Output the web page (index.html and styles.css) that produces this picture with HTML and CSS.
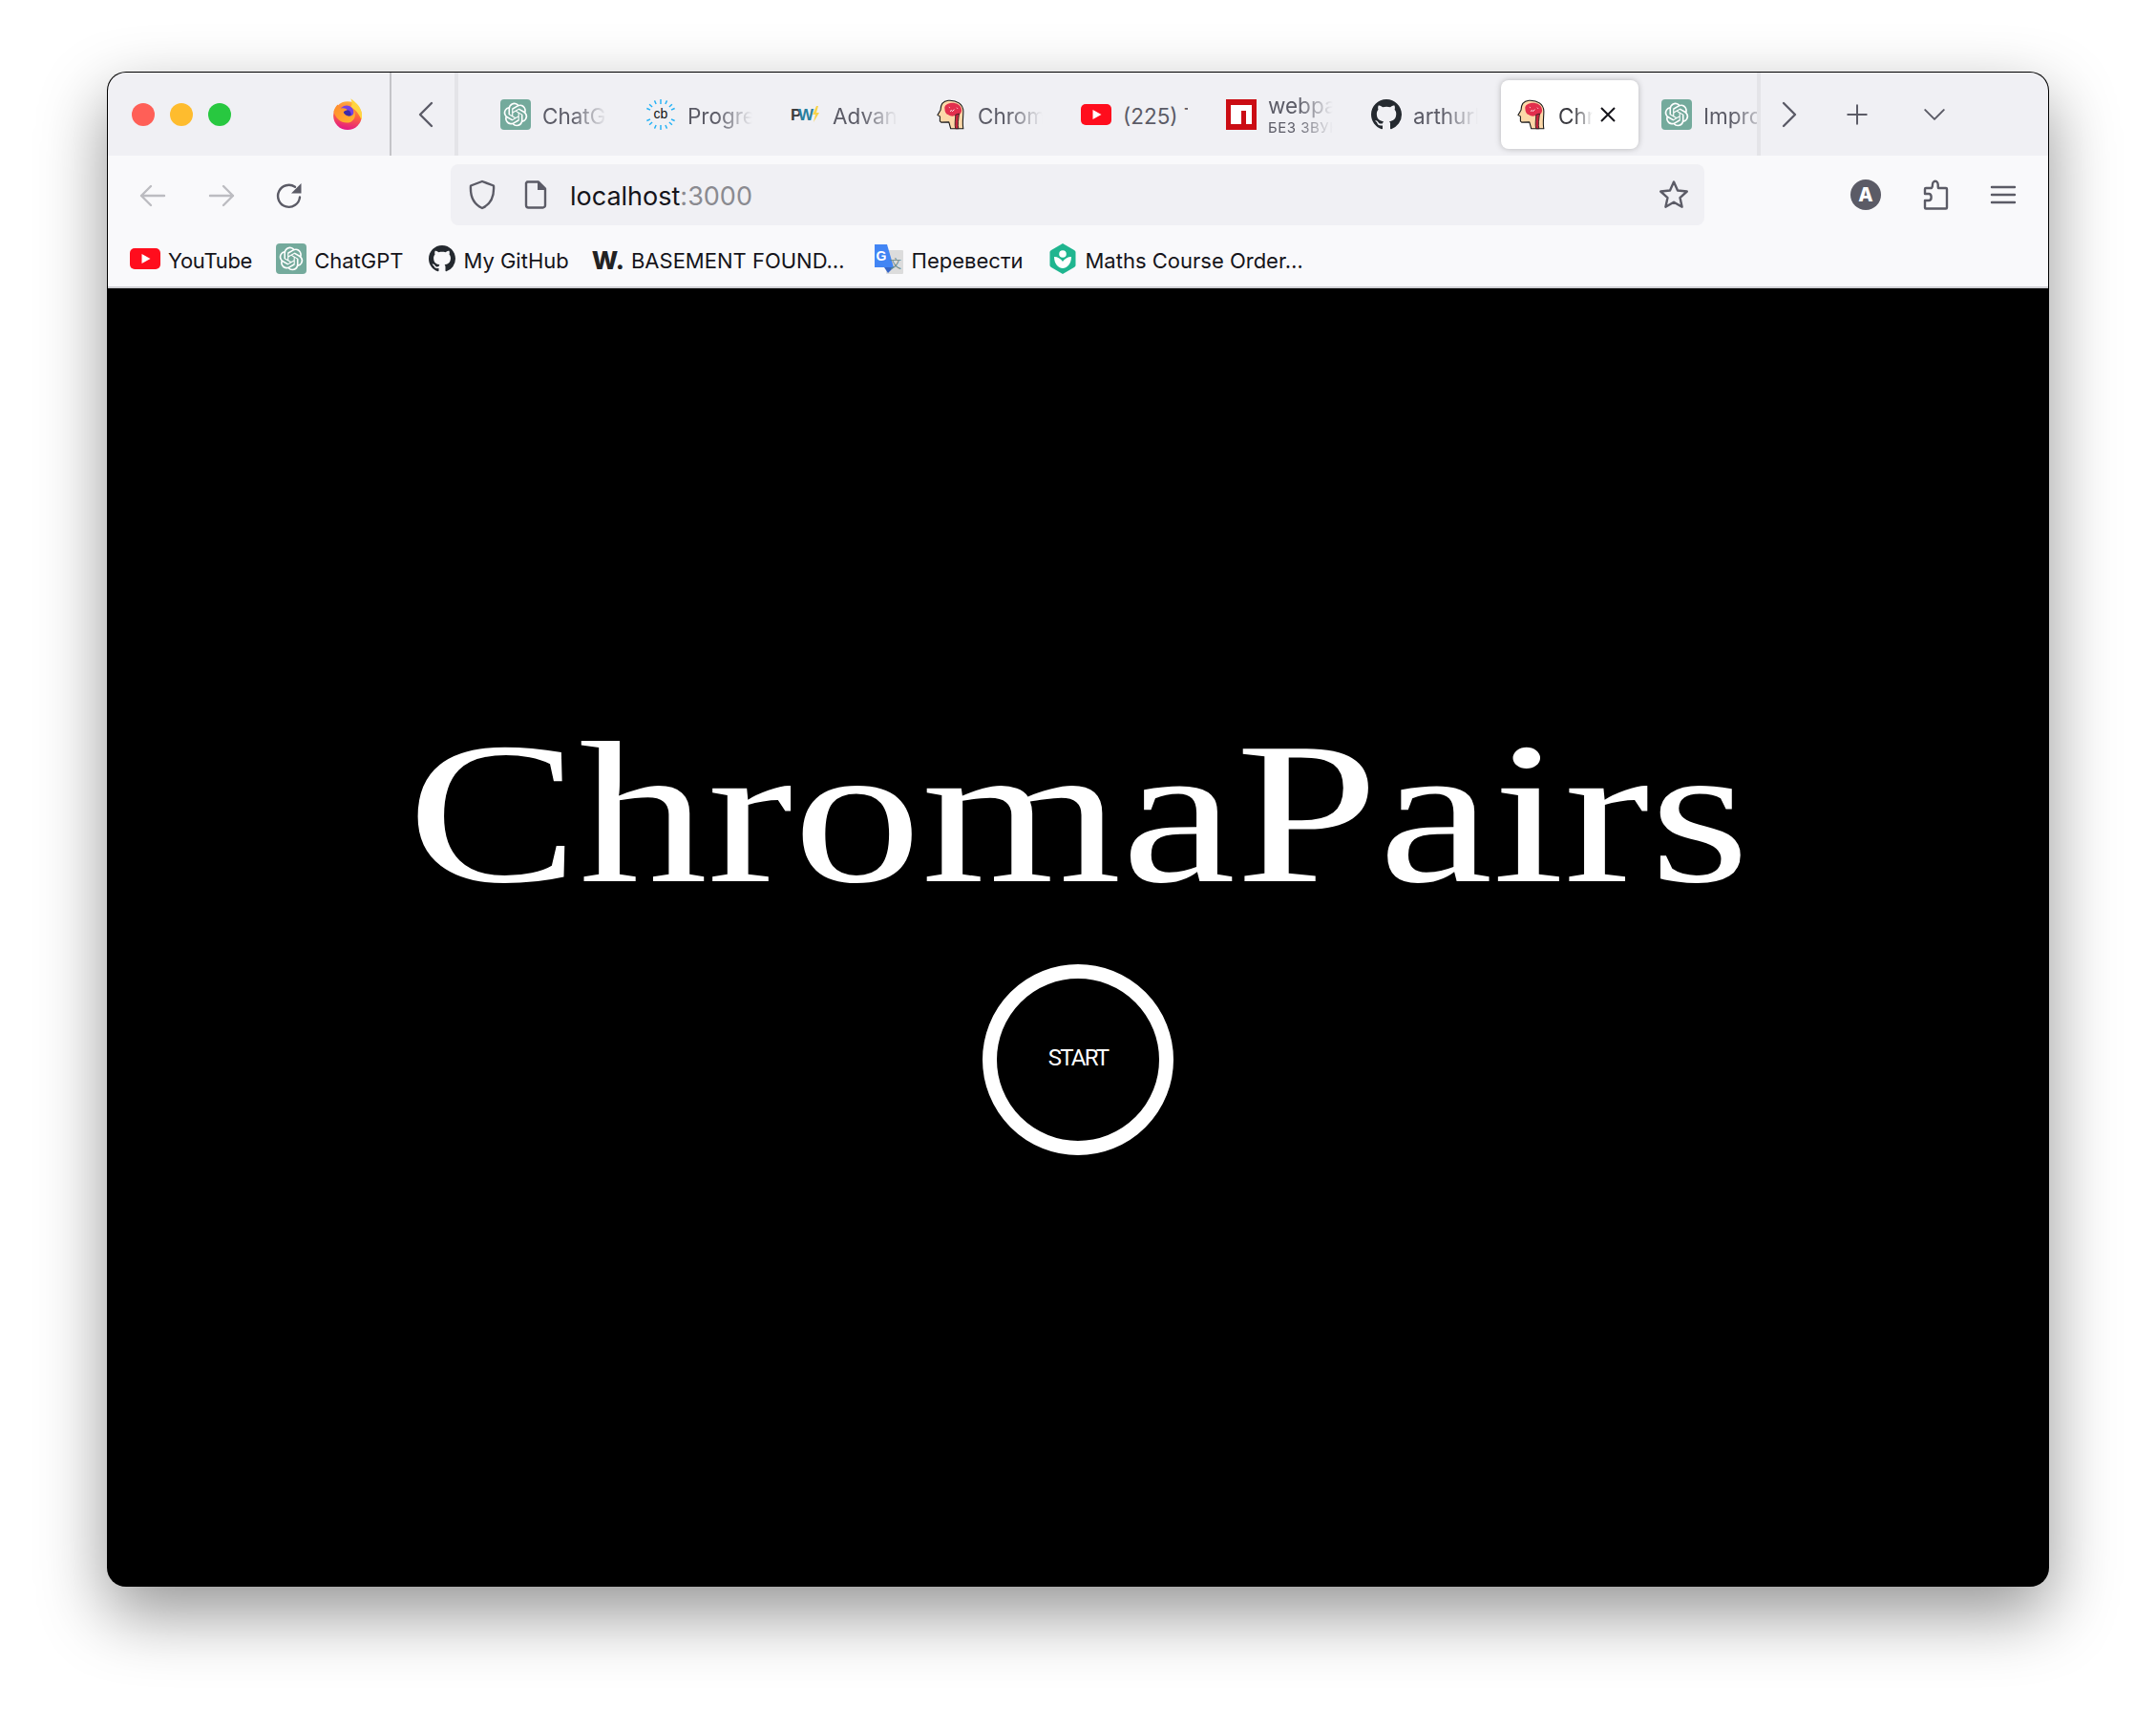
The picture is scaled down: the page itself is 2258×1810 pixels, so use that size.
FILE: index.html
```html
<!DOCTYPE html>
<html lang="en">
<head>
    <meta charset="UTF-8">
    <meta name="viewport" content="width=device-width, initial-scale=1.0">
    <title>ChromaPairs</title>
    <link rel="stylesheet" href="styles.css">
</head>
<body>
    <!-- shared icons -->
    <svg class="icon-defs" xmlns="http://www.w3.org/2000/svg">
        <symbol id="i-gpt" viewBox="0 0 32 32">
            <rect width="32" height="32" rx="4" fill="#74aa9c"/>
            <g transform="translate(3.6 3.6) scale(1.03)">
                <path fill="#fff" d="M22.2819 9.8211a5.9847 5.9847 0 0 0-.5157-4.9108 6.0462 6.0462 0 0 0-6.5098-2.9A6.0651 6.0651 0 0 0 4.9807 4.1818a5.9847 5.9847 0 0 0-3.9977 2.9 6.0462 6.0462 0 0 0 .7427 7.0966 5.98 5.98 0 0 0 .511 4.9107 6.051 6.051 0 0 0 6.5146 2.9001A5.9847 5.9847 0 0 0 13.2599 24a6.0557 6.0557 0 0 0 5.7718-4.2058 5.9894 5.9894 0 0 0 3.9977-2.9001 6.0557 6.0557 0 0 0-.7475-7.0729zm-9.022 12.6081a4.4755 4.4755 0 0 1-2.8764-1.0408l.1419-.0804 4.7783-2.7582a.7948.7948 0 0 0 .3927-.6813v-6.7369l2.02 1.1686a.071.071 0 0 1 .038.052v5.5826a4.504 4.504 0 0 1-4.4945 4.4944zm-9.6607-4.1254a4.4708 4.4708 0 0 1-.5346-3.0137l.142.0852 4.783 2.7582a.7712.7712 0 0 0 .7806 0l5.8428-3.3685v2.3324a.0804.0804 0 0 1-.0332.0615L9.74 19.9502a4.4992 4.4992 0 0 1-6.1408-1.6464zM2.3408 7.8956a4.485 4.485 0 0 1 2.3655-1.9728V11.6a.7664.7664 0 0 0 .3879.6765l5.8144 3.3543-2.0201 1.1685a.0757.0757 0 0 1-.071 0l-4.8303-2.7865A4.504 4.504 0 0 1 2.3408 7.872zm16.5963 3.8558L13.1038 8.364 15.1192 7.2a.0757.0757 0 0 1 .071 0l4.8303 2.7913a4.4944 4.4944 0 0 1-.6765 8.1042v-5.6772a.79.79 0 0 0-.407-.667zm2.0107-3.0231l-.142-.0852-4.7735-2.7818a.7759.7759 0 0 0-.7854 0L9.409 9.2297V6.8974a.0662.0662 0 0 1 .0284-.0615l4.8303-2.7866a4.4992 4.4992 0 0 1 6.6802 4.66zM8.3065 12.863l-2.02-1.1638a.0804.0804 0 0 1-.038-.0567V6.0742a4.4992 4.4992 0 0 1 7.3757-3.4537l-.142.0805L8.704 5.459a.7948.7948 0 0 0-.3927.6813zm1.0976-2.3654l2.602-1.4998 2.6069 1.4998v2.9994l-2.5974 1.4997-2.6067-1.4997Z"/>
            </g>
        </symbol>
        <symbol id="i-github" viewBox="0 0 16 16">
            <path fill="#24292f" d="M8 0C3.58 0 0 3.58 0 8c0 3.54 2.29 6.53 5.47 7.59.4.07.55-.17.55-.38 0-.19-.01-.82-.01-1.49-2.01.37-2.53-.49-2.69-.94-.09-.23-.48-.94-.82-1.13-.28-.15-.68-.52-.01-.53.63-.01 1.08.58 1.23.82.72 1.21 1.87.87 2.33.66.07-.52.28-.87.51-1.07-1.78-.2-3.64-.89-3.64-3.95 0-.87.31-1.59.82-2.15-.08-.2-.36-1.02.08-2.12 0 0 .67-.21 2.2.82.64-.18 1.32-.27 2-.27.68 0 1.36.09 2 .27 1.53-1.04 2.2-.82 2.2-.82.44 1.1.16 1.92.08 2.12.51.56.82 1.27.82 2.15 0 3.07-1.87 3.75-3.65 3.95.29.25.54.73.54 1.48 0 1.07-.01 1.93-.01 2.2 0 .21.15.46.55.38A8.013 8.013 0 0016 8c0-4.42-3.58-8-8-8z"/>
        </symbol>
        <symbol id="i-youtube" viewBox="0 0 32 32">
            <rect y="5" width="32" height="22" rx="5" fill="#ff0d1d"/>
            <path fill="#fff" d="M12.5 11l9 5-9 5z"/>
        </symbol>
        <symbol id="i-brain" viewBox="18 20 90 102">
            <path fill="#fcd8a8" stroke="#1a1a1a" stroke-width="3.5" stroke-linejoin="round" d="M54 24C34 26 28 42 28 56L18 73l8 4v16l4 4 26-1 6 22 42 0C100 100 104 80 104 60 104 36 82 22 54 24Z"/>
            <path fill="#e22f4d" d="M42 52C38 38 58 30 72 32 90 34 100 46 98 60 96 70 88 74 80 72 70 80 60 76 54 72 46 70 42 62 42 52Z"/>
            <path fill="#c9263f" stroke="#1a1a1a" stroke-width="2.5" d="M78 72C78 88 74 104 78 118H88C84 104 88 88 90 68Z"/>
            <path fill="none" stroke="#fff" stroke-width="3" d="M60 60l5-3 3 3 6-6M56 46l3 2M82 48l3 3"/>
        </symbol>
    </svg>

    <div class="browser">
        <header class="titlebar">
            <div class="lights">
                <span class="light light-red"></span>
                <span class="light light-yellow"></span>
                <span class="light light-green"></span>
            </div>
            <svg class="firefox" viewBox="27 20 90 100">
                <defs>
                    <linearGradient id="fx-base" x1="0.6" y1="0" x2="0.4" y2="1">
                        <stop offset="0" stop-color="#ffb13c"/>
                        <stop offset="0.45" stop-color="#ff6a3a"/>
                        <stop offset="1" stop-color="#e31587"/>
                    </linearGradient>
                    <linearGradient id="fx-tail" x1="0" y1="0" x2="1" y2="1">
                        <stop offset="0" stop-color="#ff8a2c"/>
                        <stop offset="1" stop-color="#ffb52e"/>
                    </linearGradient>
                </defs>
                <circle cx="72" cy="75" r="45" fill="url(#fx-base)"/>
                <path fill="#ffd53f" d="M82 21C104 36 124 58 116 88 108 68 96 54 82 48 88 40 86 30 82 21Z"/>
                <circle cx="69" cy="66" r="23" fill="#7542e5"/>
                <circle cx="70" cy="70" r="13" fill="#3b2aa8"/>
                <path fill="url(#fx-tail)" d="M28 62C31 52 34 46 41 40 42 46 46 50 52 52 60 50 67 52 71 57 64 60 60 60 59 65 63 73 71 78 81 76 90 74 94 66 91 56 101 70 96 92 76 97 54 101 34 86 28 62Z"/>
            </svg>
            <span class="bar-divider"></span>
            <button class="strip-btn strip-back">
                <svg viewBox="0 0 32 32"><path d="M21 4L9 16l12 12"/></svg>
            </button>
            <span class="strip-fade"></span>

            <div class="tabs">
                <div class="tab">
                    <svg class="tab-icon"><use href="#i-gpt"/></svg>
                    <span class="tab-label">ChatGPT</span>
                </div>
                <div class="tab">
                    <svg class="tab-icon" viewBox="0 0 32 32">
                        <g class="cb-rays">
                            <path d="M16 0v5"/>
                            <path d="M16 0v4" transform="rotate(24 16 16)"/>
                            <path d="M16 0v4" transform="rotate(48 16 16)"/>
                            <path d="M16 0v4" transform="rotate(66 16 16)"/>
                            <path d="M16 0v4" transform="rotate(114 16 16)"/>
                            <path d="M16 0v4" transform="rotate(132 16 16)"/>
                            <path d="M16 0v4" transform="rotate(156 16 16)"/>
                            <path d="M16 0v5" transform="rotate(180 16 16)"/>
                            <path d="M16 0v4" transform="rotate(204 16 16)"/>
                            <path d="M16 0v4" transform="rotate(228 16 16)"/>
                            <path d="M16 0v4" transform="rotate(246 16 16)"/>
                            <path d="M16 0v4" transform="rotate(294 16 16)"/>
                            <path d="M16 0v4" transform="rotate(312 16 16)"/>
                            <path d="M16 0v4" transform="rotate(336 16 16)"/>
                        </g>
                        <text class="cb-text" x="16" y="20">cb</text>
                    </svg>
                    <span class="tab-label">Progress</span>
                </div>
                <div class="tab">
                    <svg class="tab-icon" viewBox="0 0 32 32">
                        <text class="pw-p" x="0" y="22">P</text>
                        <text class="pw-w" x="8" y="22">W</text>
                        <path fill="#f8d34b" d="M27 7l-4 9h3l-2 8 6-10h-3l2-7z"/>
                    </svg>
                    <span class="tab-label">Advanced</span>
                </div>
                <div class="tab">
                    <svg class="tab-icon"><use href="#i-brain"/></svg>
                    <span class="tab-label">ChromaPairs</span>
                </div>
                <div class="tab">
                    <svg class="tab-icon"><use href="#i-youtube"/></svg>
                    <span class="tab-label tab-label-clip">(225) Trending</span>
                </div>
                <div class="tab">
                    <svg class="tab-icon" viewBox="0 0 32 32">
                        <rect width="32" height="32" fill="#cb0d14"/>
                        <rect x="5" y="6" width="22" height="20" fill="#fff"/>
                        <rect x="16" y="12" width="5" height="14" fill="#cb0d14"/>
                    </svg>
                    <span class="tab-label tab-label-double">
                        <span>webpack</span>
                        <small>БЕЗ ЗВУКА</small>
                    </span>
                </div>
                <div class="tab">
                    <svg class="tab-icon"><use href="#i-github"/></svg>
                    <span class="tab-label">arthurlunkov</span>
                </div>
                <div class="tab tab-active">
                    <svg class="tab-icon"><use href="#i-brain"/></svg>
                    <span class="tab-label">ChromaPairs</span>
                    <svg class="tab-close" viewBox="0 0 16 16"><path d="M1 1l14 14M15 1L1 15"/></svg>
                </div>
                <div class="tab">
                    <svg class="tab-icon"><use href="#i-gpt"/></svg>
                    <span class="tab-label">Improve</span>
                </div>
            </div>

            <span class="strip-fade"></span>
            <button class="strip-btn strip-next">
                <svg viewBox="0 0 32 32"><path d="M11 4l12 12-12 12"/></svg>
            </button>
            <button class="strip-btn strip-new">
                <svg viewBox="0 0 32 32"><path d="M16 4v24M4 16h24"/></svg>
            </button>
            <button class="strip-btn strip-list">
                <svg viewBox="0 0 32 32"><path d="M4 10l12 12 12-12"/></svg>
            </button>
        </header>

        <nav class="toolbar">
            <svg class="tool tool-off tool-back" viewBox="0 0 32 32"><path d="M28 16H4M14 6L4 16l10 10"/></svg>
            <svg class="tool tool-off tool-forward" viewBox="0 0 32 32"><path d="M4 16h24M18 6l10 10-10 10"/></svg>
            <svg class="tool tool-reload" viewBox="0 0 32 32">
                <path d="M26 17.5A11.5 11.5 0 1 1 21 6.8"/>
                <path class="solid" d="M27.5 3v10.5H17z"/>
            </svg>
            <div class="urlbar">
                <svg class="tool" viewBox="0 0 32 32"><path d="M16 2l12 4.500c.6 9-1 18.500-12 23.500C5 25 3.400 15.500 4 6.500z"/></svg>
                <svg class="tool url-page" viewBox="0 0 32 32">
                    <path d="M7 2.500h12l7 7V27a2.500 2.500 0 0 1-2.500 2.500h-15A2.500 2.500 0 0 1 6 27V4z"/>
                    <path class="solid" d="M18 2l9 9h-9z"/>
                </svg>
                <span class="url-text">localhost<span class="url-port">:3000</span></span>
                <svg class="tool url-star" viewBox="0 0 32 32"><path d="M16 2.500l4 9 9.800 1-7.300 6.600 2.100 9.600L16 23.800l-8.600 4.900 2.100-9.600L2.200 12.500l9.800-1z"/></svg>
            </div>
            <svg class="tool tool-account" viewBox="0 0 32 32">
                <circle class="solid" cx="16" cy="16" r="16"/>
                <text class="account-letter" x="16" y="23">A</text>
            </svg>
            <svg class="tool tool-puzzle" viewBox="0 0 32 32"><path d="M5 22v7.500a1 1 0 0 0 1 1h21a1 1 0 0 0 1-1V10a1 1 0 0 0-1-1h-8c-1-3 1-5-2-7-2-1-4 1-4 3 0 2 0 3-1 4H6a1 1 0 0 0-1 1v5h4c3.500 0 3.500 7 0 7z"/></svg>
            <svg class="tool tool-menu" viewBox="0 0 32 32"><path d="M4 8h24M4 16h24M4 24h24"/></svg>
        </nav>

        <div class="bookmarks">
            <a class="bookmark bookmark-first">
                <svg class="bookmark-icon"><use href="#i-youtube"/></svg>
                YouTube
            </a>
            <a class="bookmark">
                <svg class="bookmark-icon"><use href="#i-gpt"/></svg>
                ChatGPT
            </a>
            <a class="bookmark bookmark-hub">
                <svg class="bookmark-icon bookmark-gh"><use href="#i-github"/></svg>
                My GitHub
            </a>
            <a class="bookmark bookmark-basement">
                <span class="bookmark-w">W.</span>
                BASEMENT FOUND…
            </a>
            <a class="bookmark">
                <svg class="bookmark-icon" viewBox="0 0 32 32">
                    <rect x="13" y="7" width="18" height="25" rx="1" fill="#dcdcdc"/>
                    <path fill="#4285f4" d="M1 1h13l7 24H1z"/>
                    <path fill="#3565c8" d="M11 25h10l-6 6z"/>
                    <text class="translate-g" x="8" y="18">G</text>
                    <text class="translate-zh" x="23" y="26">文</text>
                </svg>
                Перевести
            </a>
            <a class="bookmark">
                <svg class="bookmark-icon" viewBox="0 0 32 32">
                    <path fill="#1fb58f" d="M16 0l12 7q1.500 1 1.500 2v14q0 1-1.500 2L16 32 4 25q-1.500-1-1.500-2V9Q2.500 8 4 7z"/>
                    <circle cx="16" cy="11" r="3.800" fill="#fff"/>
                    <path fill="#fff" d="M7 14c0 8 5 12 9 12s9-4 9-12c-4 0-7 2-9 5-2-3-5-5-9-5z"/>
                </svg>
                Maths Course Order…
            </a>
        </div>

        <main class="game">
            <h1 class="game-title">ChromaPairs</h1>
            <button class="start-btn">START</button>
        </main>
    </div>
</body>
</html>
```

FILE: styles.css
```css
* {
    box-sizing: border-box;
}

html, body {
    margin: 0;
    height: 100%;
    overflow: hidden;
}

body {
    background-color: #fff;
    font-family: Inter, "Noto Sans", sans-serif;
    color: #15141a;
    padding: 75px 112px 148px;
}

.icon-defs {
    display: none;
}

svg {
    flex: none;
    display: block;
}

button {
    background: none;
    border: 0;
    padding: 0;
}

/* window */
.browser {
    height: 100%;
    display: flex;
    flex-direction: column;
    border: 1px solid rgba(0, 0, 0, 0.22);
    border-radius: 20px;
    overflow: hidden;
    box-shadow: 0 28px 70px rgba(0, 0, 0, 0.42);
    background-color: #000;
}

/* tab strip */
.titlebar {
    flex: none;
    height: 87px;
    display: flex;
    align-items: center;
    background-color: #f0f0f4;
}

.lights {
    display: flex;
    gap: 16px;
    margin-left: 25px;
}

.light {
    width: 24px;
    height: 24px;
    border-radius: 50%;
}

.light-red { background-color: #ff5f57; }
.light-yellow { background-color: #febc2e; }
.light-green { background-color: #28c840; }

.firefox {
    width: 30px;
    height: 33px;
    margin-left: 107px;
}

.bar-divider {
    width: 2px;
    height: 100%;
    margin-left: 29px;
    background-color: #c4c4c8;
}

.strip-btn {
    display: flex;
    align-items: center;
    justify-content: center;
}

.strip-btn svg {
    width: 32px;
    height: 32px;
    fill: none;
    stroke: #5b5b66;
    stroke-width: 2.4;
    stroke-linecap: round;
    stroke-linejoin: round;
}

.strip-back {
    width: 66px;
    padding-left: 8px;
}

.strip-fade {
    width: 4px;
    height: 100%;
    background-color: #e4e4e8;
}

.tabs {
    flex: none;
    width: 1336px;
    margin-left: 24px;
    height: 100%;
    display: flex;
    align-items: center;
    overflow: hidden;
}

.tab {
    flex: none;
    width: 152px;
    height: 72px;
    padding: 0 20px;
    display: flex;
    align-items: center;
    gap: 12px;
    position: relative;
    margin-top: 1px;
}

.tab-icon {
    width: 32px;
    height: 32px;
}

.tab-label {
    flex: 1;
    min-width: 0;
    padding-top: 3px;
    font-size: 22.5px;
    color: #5b5b66;
    white-space: nowrap;
    overflow: hidden;
    -webkit-mask-image: linear-gradient(to right, #000 45%, transparent 100%);
    mask-image: linear-gradient(to right, #000 45%, transparent 100%);
}

.tab-label-clip {
    -webkit-mask-image: none;
    mask-image: none;
}

.tab-label-double {
    display: flex;
    flex-direction: column;
    padding-top: 2px;
    line-height: 22px;
}

.tab-label-double small {
    margin-top: 4px;
    font-size: 15px;
    line-height: 16px;
    letter-spacing: 0.5px;
}

.tab-active::before {
    content: "";
    position: absolute;
    inset: 0 4px;
    background-color: #fff;
    border-radius: 8px;
    box-shadow: 0 0 6px rgba(0, 0, 0, 0.25);
}

.tab-active .tab-icon,
.tab-active .tab-label {
    position: relative;
}

.tab-active .tab-label {
    color: #3a3a40;
    margin-right: 32px;
}

.tab-close {
    position: absolute;
    left: 108px;
    top: 28px;
    width: 16px;
    height: 16px;
    fill: none;
    stroke: #15141a;
    stroke-width: 2;
}

.strip-next {
    width: 32px;
    margin-left: 13px;
}

.strip-new {
    width: 32px;
    margin-left: 40px;
}

.strip-list {
    width: 32px;
    margin-left: 49px;
}

.strip-new svg {
    width: 26px;
    height: 26px;
}

.strip-list svg {
    width: 26px;
    height: 26px;
}

/* tab icon details */
.cb-rays path {
    fill: none;
    stroke: #1fb0f5;
    stroke-width: 1.4;
}

.cb-text {
    font-family: "Liberation Sans", sans-serif;
    font-size: 14px;
    text-anchor: middle;
    fill: #111;
}

.pw-p,
.pw-w {
    font-family: "Liberation Sans", sans-serif;
    font-size: 17px;
    font-weight: 700;
}

.pw-p { fill: #3d3d3d; }
.pw-w { fill: #2a7f9e; }

/* toolbar */
.toolbar {
    flex: none;
    height: 77px;
    padding: 9px 0 4px 31px;
    display: flex;
    align-items: center;
    background-color: #f9f9fb;
}

.tool {
    width: 32px;
    height: 32px;
    fill: none;
    stroke: #5b5b66;
    stroke-width: 2.4;
    stroke-linecap: round;
    stroke-linejoin: round;
}

.tool .solid {
    fill: #5b5b66;
    stroke: none;
}

.tool-off {
    stroke: #bcbcc1;
}

.tool-back {
    margin-top: 2px;
}

.tool-forward {
    margin-top: 2px;
    margin-left: 40px;
}

.tool-reload {
    margin-top: 2px;
    margin-left: 40px;
}

.urlbar {
    width: 1313px;
    height: 64px;
    margin-left: 152px;
    padding: 0 16px 0 17px;
    display: flex;
    align-items: center;
    background-color: #f0f0f4;
    border-radius: 8px;
}

.url-page {
    margin-left: 24px;
}

.url-text {
    margin-left: 20px;
    padding-top: 2px;
    font-size: 27px;
    color: #15141a;
}

.url-port {
    color: #8a8a90;
}

.url-star {
    margin-left: auto;
}

.tool-account {
    margin-left: 153px;
}

.account-letter {
    font-family: Inter, sans-serif;
    font-size: 20px;
    font-weight: 800;
    text-anchor: middle;
    fill: #fff;
    stroke: none;
}

.tool-puzzle {
    margin-left: 41px;
}

.tool-menu {
    margin-left: 39px;
}

/* bookmarks */
.bookmarks {
    flex: none;
    height: 62px;
    padding: 2px 0 0 23px;
    display: flex;
    align-items: center;
    gap: 25px;
    background-color: #f9f9fb;
    border-bottom: 2px solid #cfcfd3;
}

.bookmark {
    display: flex;
    align-items: center;
    gap: 8px;
    padding-top: 4px;
    font-size: 22px;
    white-space: nowrap;
}

.bookmark-first {
    letter-spacing: -0.3px;
}

.bookmark-hub {
    margin-right: -1px;
}

.bookmark-basement {
    gap: 7px;
    margin-right: 5px;
}

.bookmark-icon {
    width: 32px;
    height: 32px;
    margin-top: -4px;
}

.bookmark-gh {
    width: 28px;
    height: 28px;
    margin-left: 2px;
}

.bookmark-w {
    margin-top: -2px;
    font-size: 26px;
    font-weight: 800;
    color: #222;
}

.translate-g {
    font-family: "Liberation Sans", sans-serif;
    font-size: 14px;
    font-weight: 700;
    text-anchor: middle;
    fill: #fff;
}

.translate-zh {
    font-family: "Noto Sans CJK SC", sans-serif;
    font-size: 12px;
    text-anchor: middle;
    fill: #6b8a8a;
}

/* page */
.game {
    flex: 1;
    min-height: 0;
    padding-bottom: 22px;
    display: flex;
    flex-direction: column;
    align-items: center;
    justify-content: center;
    background-color: #000;
    color: #fff;
}

.game-title {
    margin: 0 0 38px;
    font-family: "Liberation Serif", serif;
    font-size: 212px;
    font-weight: 400;
    line-height: 240px;
    transform: scaleX(1.27);
}

.start-btn {
    flex: none;
    width: 200px;
    height: 200px;
    padding-bottom: 4px;
    border: 15px solid #fff;
    border-radius: 50%;
    color: #fff;
    font-family: Roboto, sans-serif;
    font-size: 24px;
    font-weight: 400;
    letter-spacing: -1.8px;
}
```
